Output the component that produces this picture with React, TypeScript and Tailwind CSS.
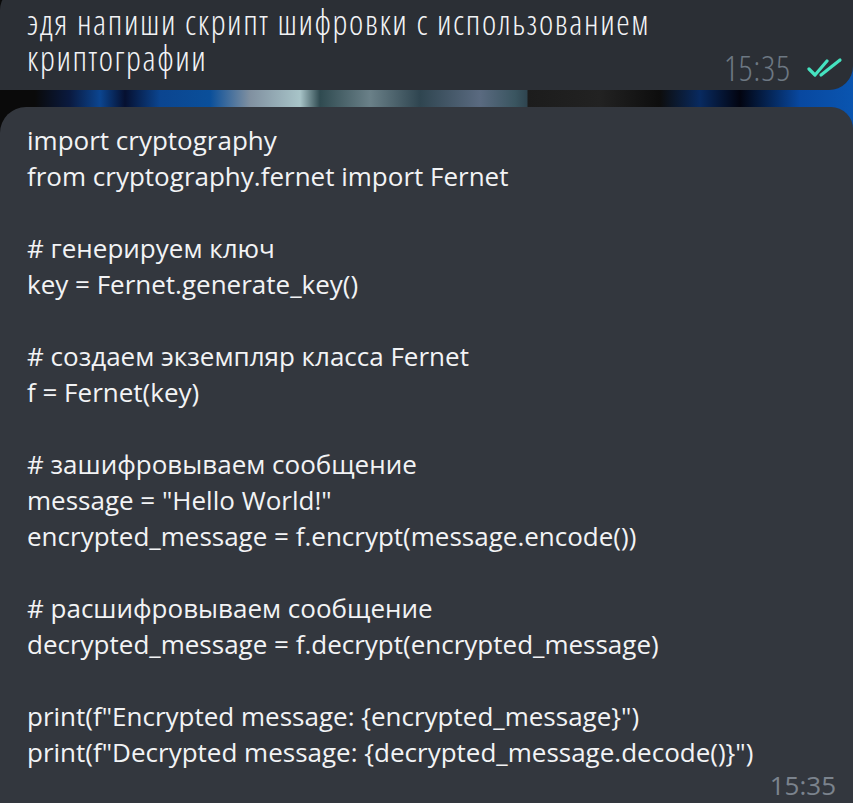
import React from 'react';

const codeLines = [
    'import cryptography',
    'from cryptography.fernet import Fernet',
    '',
    '# генерируем ключ',
    'key = Fernet.generate_key()',
    '',
    '# создаем экземпляр класса Fernet',
    'f = Fernet(key)',
    '',
    '# зашифровываем сообщение',
    'message = "Hello World!"',
    'encrypted_message = f.encrypt(message.encode())',
    '',
    '# расшифровываем сообщение',
    'decrypted_message = f.decrypt(encrypted_message)',
    '',
    'print(f"Encrypted message: {encrypted_message}")',
    'print(f"Decrypted message: {decrypted_message.decode()}")',
];

// read receipt, two slanted ticks
const DoubleCheck = () => (
    <svg width="36" height="22" viewBox="0 0 36 22" fill="none">
        <path d="M2 12 L8 18 L20 4" stroke="#45e3c0" strokeWidth="3.2" strokeLinecap="round" strokeLinejoin="round" />
        <path d="M14 18 L33 3" stroke="#45e3c0" strokeWidth="3.2" strokeLinecap="round" />
    </svg>
);

export default function App() {
    return (
        <div className="w-[853px] h-[803px] overflow-hidden flex flex-col bg-[linear-gradient(90deg,#0a0a0a_0px,#0a0a0a_35px,#0a1a40_70px,#0b4590_100px,#061030_125px,#0b4590_160px,#0a4f9a_210px,#8090a0_250px,#a8c4c8_300px,#2f4a50_320px,#6a8088_370px,#2f4550_420px,#5a6a80_480px,#3a5560_515px,#2f4550_527px,#1c1c1c_528px,#222_600px,#0d0d0d_660px,#082a60_700px,#020410_740px,#0848a0_800px,#0a55b0_853px)]">
            {/* question bubble */}
            <div className="-mt-[12px] pt-[16px] pb-[14px] pl-[27px] pr-[10px] w-[853px] bg-[#2b2f35] rounded-tl-[22px] rounded-br-[24px] flex justify-between items-end font-['Open_Sans',sans-serif] font-light font-stretch-[75%] text-[34px] tracking-[1.6px] leading-[36px] text-[#f2f3f5]">
                <div>
                    <div>эдя напиши скрипт шифровки с использованием</div>
                    <div>криптографии</div>
                </div>
                <div className="flex items-center gap-[16px] -mb-[6px] leading-[28px] tracking-[1px] text-[#6d7883]">
                    <span>15:35</span>
                    <DoubleCheck />
                </div>
            </div>

            <div className="h-[17px] shrink-0" />

            {/* answer bubble */}
            <div className="flex-1 bg-[#33373e] rounded-tl-[26px] rounded-tr-[22px] pt-[15px] pl-[27px] pr-[17px] font-['Open_Sans',sans-serif] text-[26px] leading-[36px] text-[#f2f3f5]">
                <div>
                    {codeLines.map((line, i) => (
                        <div key={i} className="h-[36px] whitespace-pre">{line}</div>
                    ))}
                </div>
                <div className="flex justify-end leading-[30px] text-[#7b838d]">15:35</div>
            </div>
        </div>
    );
}
